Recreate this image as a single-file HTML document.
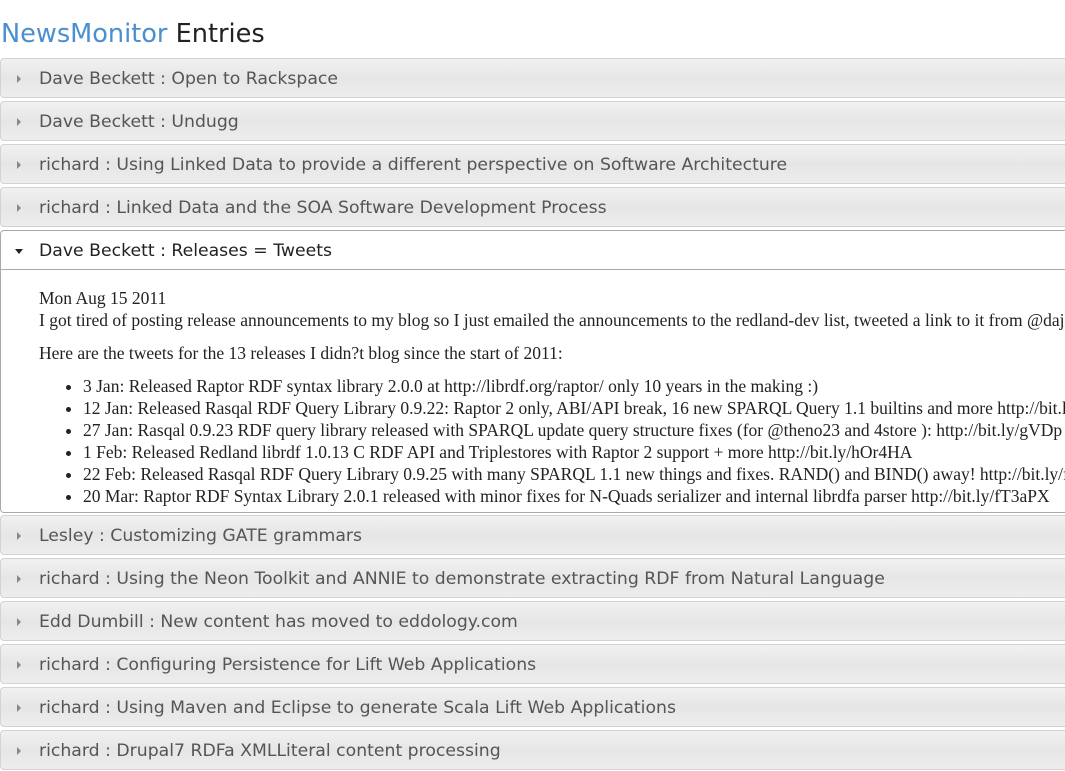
<!DOCTYPE html>
<html><head><meta charset="utf-8"><style>
body{margin:0;width:1065px;height:761px;overflow:hidden;background:#fff;font-family:"DejaVu Sans","Liberation Sans",sans-serif;}
h1{margin:0;position:absolute;left:1px;top:17px;font-weight:normal;font-size:25.6px;color:#222;line-height:34px;}
h1 span{color:#4a8fd0}
.h{position:absolute;left:0;width:1075px;height:38px;border:1px solid #d3d3d3;border-radius:4px;background:linear-gradient(#f1f1f1,#e6e6e6 50%,#ededed);color:#555;font-size:17.25px;line-height:40px;box-sizing:content-box;}
.h .t{position:absolute;left:38px;top:0;white-space:nowrap}
.h .a{position:absolute;left:16px;top:16px;width:0;height:0;border-left:4px solid #888;border-top:4px solid transparent;border-bottom:4px solid transparent}
.h.act{background:#fff;border-color:#aaa;color:#222;border-radius:4px 4px 0 0}
.h.act .a{left:14px;top:18px;border-left:4px solid transparent;border-right:4px solid transparent;border-top:5px solid #222;border-bottom:0}
.c{position:absolute;left:0;top:270px;width:1075px;height:242px;border:1px solid #aaa;border-top:0;border-radius:0 0 4px 4px;font-family:"Liberation Serif",serif;font-size:17.5px;color:#222;line-height:22px;white-space:nowrap;overflow:hidden}
.c p{margin:0;position:absolute;left:38px}
.c ul{margin:0;padding:0;position:absolute;left:82px;top:105px;list-style:disc}
</style></head><body>
<h1><span>NewsMonitor</span> Entries</h1>
<div class="h" style="top:58px"><i class="a"></i><span class="t">Dave Beckett : Open to Rackspace</span></div>
<div class="h" style="top:101px"><i class="a"></i><span class="t">Dave Beckett : Undugg</span></div>
<div class="h" style="top:144px"><i class="a"></i><span class="t">richard : Using Linked Data to provide a different perspective on Software Architecture</span></div>
<div class="h" style="top:187px"><i class="a"></i><span class="t">richard : Linked Data and the SOA Software Development Process</span></div>
<div class="h act" style="top:230px"><i class="a"></i><span class="t">Dave Beckett : Releases = Tweets</span></div>
<div class="c">
<p style="top:17px">Mon Aug 15 2011<br>I got tired of posting release announcements to my blog so I just emailed the announcements to the redland-dev list, tweeted a link to it from @dajobe</p>
<p style="top:72px">Here are the tweets for the 13 releases I didn?t blog since the start of 2011:</p>
<ul>
<li>3 Jan: Released Raptor RDF syntax library 2.0.0 at http://librdf.org/raptor/ only 10 years in the making :)</li>
<li>12 Jan: Released Rasqal RDF Query Library 0.9.22: Raptor 2 only, ABI/API break, 16 new SPARQL Query 1.1 builtins and more http://bit.ly/</li>
<li>27 Jan: Rasqal 0.9.23 RDF query library released with SPARQL update query structure fixes (for @theno23 and 4store ): http://bit.ly/gVDp</li>
<li>1 Feb: Released Redland librdf 1.0.13 C RDF API and Triplestores with Raptor 2 support + more http://bit.ly/hOr4HA</li>
<li>22 Feb: Released Rasqal RDF Query Library 0.9.25 with many SPARQL 1.1 new things and fixes. RAND() and BIND() away! http://bit.ly/fl</li>
<li>20 Mar: Raptor RDF Syntax Library 2.0.1 released with minor fixes for N-Quads serializer and internal librdfa parser http://bit.ly/fT3aPX</li>
</ul>
</div>
<div class="h" style="top:515px"><i class="a"></i><span class="t">Lesley : Customizing GATE grammars</span></div>
<div class="h" style="top:558px"><i class="a"></i><span class="t">richard : Using the Neon Toolkit and ANNIE to demonstrate extracting RDF from Natural Language</span></div>
<div class="h" style="top:601px"><i class="a"></i><span class="t">Edd Dumbill : New content has moved to eddology.com</span></div>
<div class="h" style="top:644px"><i class="a"></i><span class="t">richard : Configuring Persistence for Lift Web Applications</span></div>
<div class="h" style="top:687px"><i class="a"></i><span class="t">richard : Using Maven and Eclipse to generate Scala Lift Web Applications</span></div>
<div class="h" style="top:730px"><i class="a"></i><span class="t">richard : Drupal7 RDFa XMLLiteral content processing</span></div>
</body></html>
